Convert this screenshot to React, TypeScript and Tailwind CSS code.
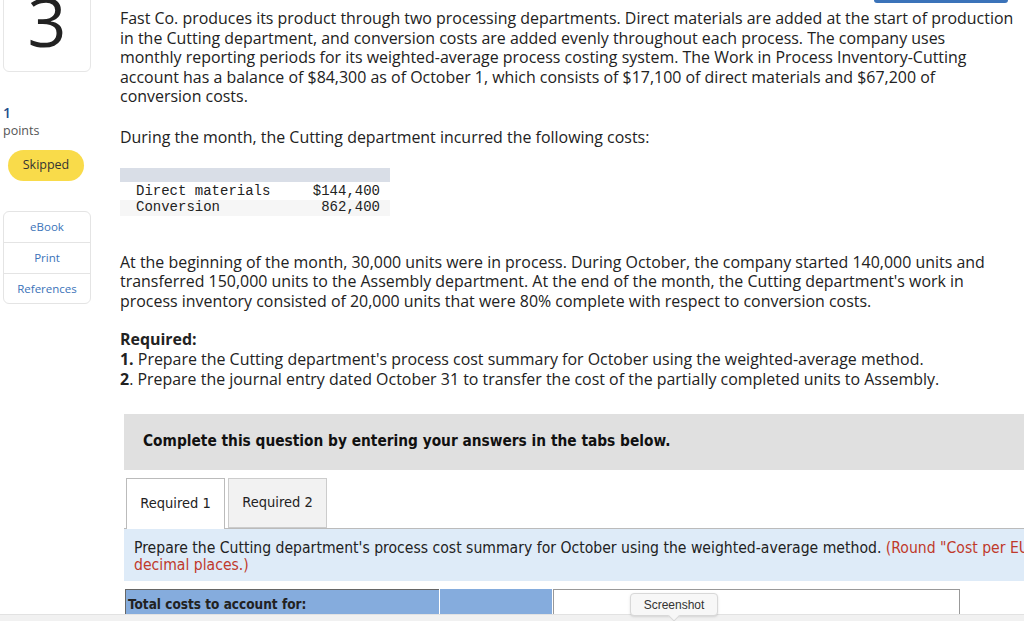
import React from 'react';

const body = { fontFamily: '"Open Sans", "Liberation Sans", sans-serif' };
const verdana = { fontFamily: '"DejaVu Sans Condensed", "DejaVu Sans", sans-serif' };

const SideLinks = () => (
  <div className="mt-[30px] w-[88px] border border-[#e4e4e4] rounded-md text-[11.5px] text-[#3b73b9] text-center">
    <div className="h-[31px] flex items-center justify-center border-b border-[#e4e4e4]">eBook</div>
    <div className="h-[31px] flex items-center justify-center border-b border-[#e4e4e4]">Print</div>
    <div className="h-[29px] flex items-center justify-center">References</div>
  </div>
);

const CostTable = () => (
  <div className="mt-[20px] w-[270px] text-[14px] text-[#222]" style={{ fontFamily: '"Liberation Mono", "DejaVu Sans Mono", monospace' }}>
    <div className="h-[14px] bg-[#d9dee7]" />
    <div className="h-[16px] flex items-center justify-between pl-[16px] pr-[10px] mt-[2px]">
      <span>Direct materials</span>
      <span>$144,400</span>
    </div>
    <div className="h-[16px] flex items-center justify-between pl-[16px] pr-[10px] bg-[#f6f6f6]">
      <span>Conversion</span>
      <span>862,400</span>
    </div>
  </div>
);

export default function App() {
  return (
    <div className="relative w-[1024px] h-[621px] overflow-hidden bg-white text-[#222]" style={body}>
      <div className="absolute top-0 left-[874px] w-[134px] h-[3px] bg-[#3b73b9] rounded-b" />
      <div className="flex">
        {/* left column */}
        <div className="w-[120px] shrink-0 pl-[3px]">
          <div className="-mt-[20px] w-[88px] h-[92px] border border-[#e6e6e6] rounded-md flex items-center justify-center">
            <span className="text-[68px] font-normal leading-none text-[#222] mt-[-10px]">3</span>
          </div>
          <div className="mt-[32px] text-[14px] leading-[18px] text-[#1f4e8c] font-semibold">1</div>
          <div className="text-[12.5px] leading-[17px] text-[#555]">points</div>
          <div className="mt-[11px] ml-[5px] w-[76px] h-[31px] rounded-full bg-[#f9db4a] flex items-center justify-center text-[12.5px] text-[#333]">
            Skipped
          </div>
          <SideLinks />
        </div>

        {/* main column */}
        <div className="flex-1 pt-[9px] text-[15.95px] leading-[19.6px]">
          <p className="whitespace-nowrap">
            Fast Co. produces its product through two processing departments. Direct materials are added at the start of production<br />
            in the Cutting department, and conversion costs are added evenly throughout each process. The company uses<br />
            monthly reporting periods for its weighted-average process costing system. The Work in Process Inventory-Cutting<br />
            account has a balance of $84,300 as of October 1, which consists of $17,100 of direct materials and $67,200 of<br />
            conversion costs.
          </p>
          <p className="mt-[21px]">During the month, the Cutting department incurred the following costs:</p>
          <CostTable />
          <p className="mt-[37px] whitespace-nowrap">
            At the beginning of the month, 30,000 units were in process. During October, the company started 140,000 units and<br />
            transferred 150,000 units to the Assembly department. At the end of the month, the Cutting department's work in<br />
            process inventory consisted of 20,000 units that were 80% complete with respect to conversion costs.
          </p>
          <div className="mt-[19px] whitespace-nowrap">
            <div className="font-bold">Required:</div>
            <div><span className="font-bold">1.</span> Prepare the Cutting department's process cost summary for October using the weighted-average method.</div>
            <div><span className="font-bold">2</span>. Prepare the journal entry dated October 31 to transfer the cost of the partially completed units to Assembly.</div>
          </div>

          <div className="mt-[25px]" style={verdana}>
            <div className="ml-[4px] h-[56px] bg-[#e0e0e0] flex items-center pl-[19px] text-[15.3px] font-bold text-[#111] whitespace-nowrap">
              Complete this question by entering your answers in the tabs below.
            </div>
            <div className="mt-[8px] ml-[6px] flex gap-[3px] text-[14.5px] text-[#222]">
              <div className="w-[99px] h-[51px] border border-b-0 border-[#bbb] bg-white flex items-center justify-center relative z-10 -mb-px">Required 1</div>
              <div className="w-[99px] h-[50px] border border-[#ccc] bg-[#f2f2f2] flex items-center justify-center">Required 2</div>
            </div>
            <div className="ml-[4px] border-t border-[#bbb] bg-[#deebf8] px-[10px] pt-[11px] pb-[7px] text-[15.6px] leading-[17px] whitespace-nowrap">
              Prepare the Cutting department's process cost summary for October using the weighted-average method. <span className="text-[#c0392b]">(Round "Cost per EUP" to 2</span><br />
              <span className="text-[#c0392b]">decimal places.)</span>
            </div>
            <div className="ml-[5px] mt-[8px] flex h-[26px] text-[13.5px]">
              <div className="w-[314px] bg-[#85acdd] border-t border-l border-[#666] font-bold flex items-end pl-[2px] pb-[1px]">Total costs to account for:</div>
              <div className="w-[112px] bg-[#85acdd] border-t border-l border-[#85acdd] ml-px" />
              <div className="w-[407px] border border-b-0 border-[#999] bg-white ml-px" />
            </div>
          </div>
        </div>
      </div>

      {/* bottom bar overlay */}
      <div className="absolute left-0 right-0 bottom-0 h-[7px] bg-[#f1f1f1] border-t border-[#e2e2e2]" />
      <div className="absolute left-[630px] top-[593px] w-[88px] h-[23px] bg-[#f7f7f7] border border-[#d8d8d8] rounded-[4px] shadow-sm flex items-center justify-center text-[12px] text-[#333]" style={{ fontFamily: '"Liberation Sans", sans-serif' }}>
        Screenshot
        <div className="absolute -bottom-[5px] left-[39px] w-[8px] h-[8px] bg-[#f7f7f7] border-r border-b border-[#d8d8d8] rotate-45" />
      </div>
    </div>
  );
}
